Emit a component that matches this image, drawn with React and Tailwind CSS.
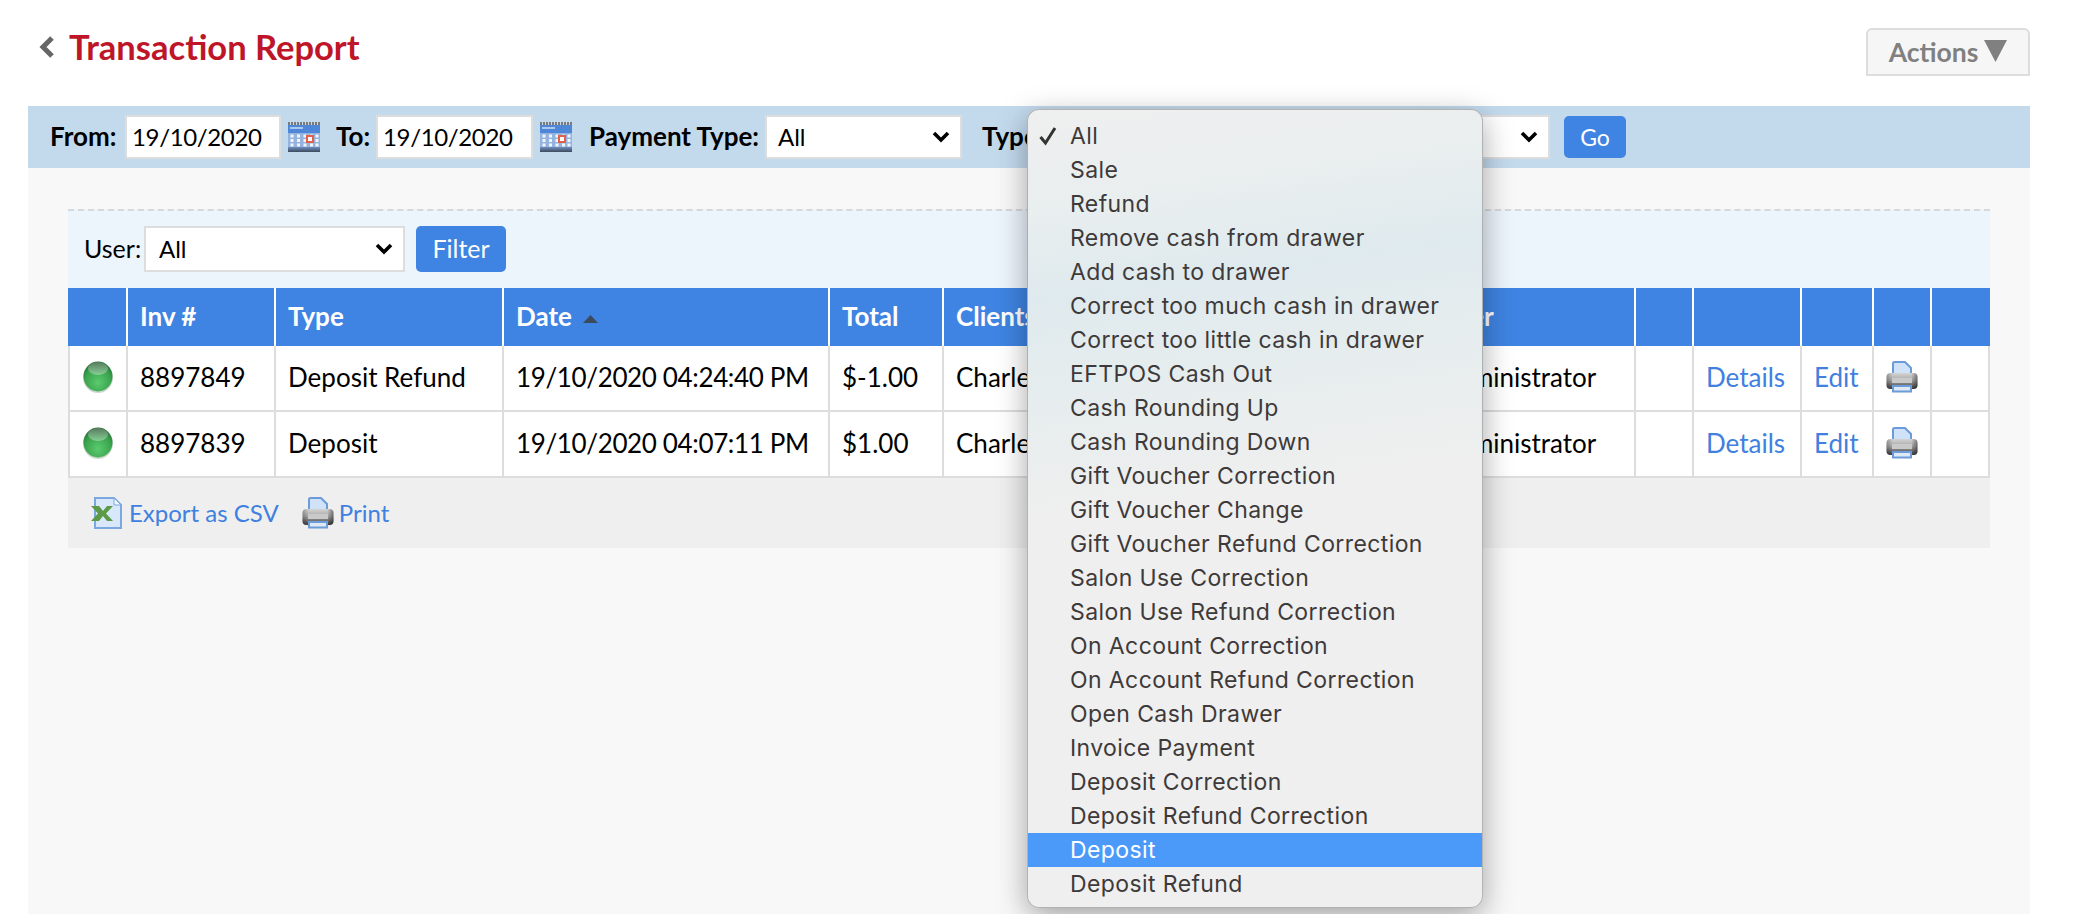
const menuItems = [
  "All",
  "Sale",
  "Refund",
  "Remove cash from drawer",
  "Add cash to drawer",
  "Correct too much cash in drawer",
  "Correct too little cash in drawer",
  "EFTPOS Cash Out",
  "Cash Rounding Up",
  "Cash Rounding Down",
  "Gift Voucher Correction",
  "Gift Voucher Change",
  "Gift Voucher Refund Correction",
  "Salon Use Correction",
  "Salon Use Refund Correction",
  "On Account Correction",
  "On Account Refund Correction",
  "Open Cash Drawer",
  "Invoice Payment",
  "Deposit Correction",
  "Deposit Refund Correction",
  "Deposit",
  "Deposit Refund",
];

const rows = [
  { inv: "8897849", type: "Deposit Refund", date: "19/10/2020 04:24:40 PM", total: "$-1.00" },
  { inv: "8897839", type: "Deposit", date: "19/10/2020 04:07:11 PM", total: "$1.00" },
];

const Chevron = () => (
  <svg width="18" height="14" viewBox="0 0 18 14" className="shrink-0">
    <path d="M2 3l7 7 7-7" fill="none" stroke="#000" strokeWidth="3.6" />
  </svg>
);

const Select = ({ className, value = "All" }) => (
  <div className={"flex items-center justify-between bg-white border-2 border-[#dddddd] pr-[10px] text-[24px] font-normal text-black " + className}>
    <span>{value}</span>
    <Chevron />
  </div>
);

const DateInput = ({ className }) => (
  <div className={"flex items-center bg-white border-2 border-[#dddddd] pl-[5px] h-[44px] text-[24px] font-normal tracking-[-0.35px] text-black " + className}>
    19/10/2020
  </div>
);

const CalendarIcon = ({ className }) => (
  <svg width="32" height="30" viewBox="0 0 32 30" className={"shrink-0 " + className}>
    <defs>
      <linearGradient id="calBottom" x1="0" y1="0" x2="0" y2="1">
        <stop offset="0" stopColor="#6f8fc0" />
        <stop offset="1" stopColor="#3c4a5c" />
      </linearGradient>
    </defs>
    <rect x="0" y="3" width="32" height="27" fill="#94b3df" />
    <rect x="0" y="3" width="32" height="8" fill="#4f87d8" />
    <rect x="2" y="5" width="13" height="2" fill="#a9c9f0" />
    <rect x="0" y="25" width="32" height="5" fill="url(#calBottom)" />
    <path d="M0 1.500h32" stroke="#7a7a7a" strokeWidth="3" strokeDasharray="2 1" />
    {[12.500, 17, 21.500].map((y) =>
      [2.500, 9, 15.500, 22, 27.500].map((x) => <rect key={x + "-" + y} x={x} y={y} width="3" height="3" fill="#f2f6fc" />)
    )}
    <rect x="19" y="14" width="6" height="6" fill="#fff" stroke="#e0604a" strokeWidth="2" />
  </svg>
);

const PrinterIcon = () => (
  <svg width="32" height="32" viewBox="0 0 32 32" className="shrink-0">
    <defs>
      <linearGradient id="printerBody" x1="0" y1="0" x2="0" y2="1">
        <stop offset="0" stopColor="#d4d4d4" />
        <stop offset="0.45" stopColor="#a8a8a8" />
        <stop offset="1" stopColor="#3c3c3c" />
      </linearGradient>
      <linearGradient id="printerSide" x1="0" y1="0" x2="1" y2="0">
        <stop offset="0" stopColor="#00000040" />
        <stop offset="0.2" stopColor="#00000000" />
        <stop offset="0.8" stopColor="#00000000" />
        <stop offset="1" stopColor="#00000066" />
      </linearGradient>
    </defs>
    <path d="M7 15V2.500A1.500 1.500 0 0 1 8.500 1H19l6 6v8z" fill="#cfe2f8" stroke="#6b9bd8" strokeWidth="2" />
    <rect x="0.500" y="12" width="31" height="16" rx="4" fill="url(#printerBody)" />
    <rect x="0.500" y="12" width="31" height="16" rx="4" fill="url(#printerSide)" />
    <rect x="6" y="17" width="20" height="5" fill="#c9c9c9" />
    <path d="M7 25h18v5.500H7z" fill="#dfe9f6" stroke="#6b9bd8" strokeWidth="2" />
  </svg>
);

const ExcelIcon = () => (
  <svg width="32" height="32" viewBox="0 0 32 32" className="shrink-0">
    <path d="M4 1h19l7 7v23H4z" fill="#d8e8fa" stroke="#7ba9df" strokeWidth="2" />
    <path d="M23 1v7h7z" fill="#f0f6fd" stroke="#7ba9df" strokeWidth="1" />
    <path d="M0 9h8l4 5 4-5h6l-7 7.500 7 7.500h-6l-4-5-4 5H0l7-7.500z" fill="#5c9a47" />
  </svg>
);

const StatusDot = () => (
  <svg width="30" height="32" viewBox="0 0 30 32" className="mx-auto block">
    <defs>
      <radialGradient id="dotFill" cx="0.5" cy="0.7" r="0.65">
        <stop offset="0" stopColor="#5acb6e" />
        <stop offset="0.7" stopColor="#3aa34e" />
        <stop offset="1" stopColor="#2a7a3a" />
      </radialGradient>
      <linearGradient id="dotShine" x1="0" y1="0" x2="0" y2="1">
        <stop offset="0" stopColor="#5a7a62" />
        <stop offset="1" stopColor="#84d092" />
      </linearGradient>
    </defs>
    <ellipse cx="15" cy="16.500" rx="15" ry="15.500" fill="#cfd8d0" />
    <ellipse cx="15" cy="15.500" rx="14.500" ry="15" fill="url(#dotFill)" />
    <ellipse cx="15" cy="7.500" rx="10" ry="6.500" fill="url(#dotShine)" />
  </svg>
);

const Th = ({ children, last }) => (
  <th className={"h-[58px] bg-[#3f84e2] text-left font-bold text-white pl-[12px] pb-[2px] " + (last ? "" : "border-r-2 border-white")}>
    {children}
  </th>
);

const Td = ({ children, first, className = "" }) => (
  <td className={"h-[66px] border-r-2 border-b-2 border-[#dddddd] bg-white pl-[12px] pb-[2px] text-black whitespace-nowrap overflow-hidden " + (first ? "border-l-2 " : "") + className}>
    {children}
  </td>
);

export default function App() {
  return (
    <div className="relative w-[2076px] h-[914px] overflow-hidden bg-white font-[Lato,sans-serif]">
      <div className="flex justify-between items-start h-[106px] pl-[39px] pr-[46px] pt-[28px]">
        <div className="flex items-center h-[38px]">
          <svg width="16" height="22" viewBox="0 0 16 22">
            <path d="M13 2L4 11l9 9" fill="none" stroke="#666" strokeWidth="5" />
          </svg>
          <h1 className="ml-[14px] text-[34.500px] font-bold text-[#be1628] leading-none">Transaction Report</h1>
        </div>
        <div className="flex items-center gap-[6px] h-[48px] w-[164px] justify-center pt-[2px] bg-[#f6f6f6] border-2 border-[#dddddd] rounded-t-[6px] text-[26.500px] font-bold text-[#808080]">
          Actions
          <svg width="23" height="22" viewBox="0 0 23 22" className="-mt-[4px]">
            <path d="M0 0h23L11.500 22z" fill="#808080" />
          </svg>
        </div>
      </div>

      <div className="ml-[28px] w-[2002px] h-[808px] bg-[#f8f8f8]">
        <div className="flex items-center h-[62px] bg-[#c3daed] pl-[22px] text-[26px] font-bold text-black">
          <b className="font-bold w-[75px] pb-[2px]">From:</b>
          <DateInput className="w-[156px]" />
          <CalendarIcon className="ml-[7px]" />
          <b className="font-bold ml-[16px] w-[40px] pb-[2px]">To:</b>
          <DateInput className="w-[157px]" />
          <CalendarIcon className="ml-[7px]" />
          <b className="font-bold ml-[17px] w-[176px] pb-[2px]">Payment Type:</b>
          <Select className="w-[197px] h-[44px] pl-[11px]" />
          <b className="font-bold ml-[20px] w-[64px] pb-[2px]">Type:</b>
          <Select className="w-[504px] h-[44px] pl-[11px]" />
          <button className="ml-[14px] w-[62px] h-[42px] rounded-[5px] bg-[#3f84e2] text-white text-[23px] font-normal">Go</button>
        </div>

        <div className="mx-[40px] mt-[41px]">
          <div className="flex items-center h-[79px] pb-[2px] bg-[#ecf4fc] border-t-2 border-dashed border-[#d8d8d8] pl-[16px] text-[25px] text-black">
            <span className="w-[60px]">User:</span>
            <Select className="w-[261px] h-[46px] pl-[13px]" />
            <button className="ml-[11px] w-[90px] h-[46px] rounded-[5px] bg-[#3f84e2] text-white text-[25px]">Filter</button>
          </div>

          <table className="table-fixed border-separate border-spacing-0 w-[1922px] text-[26px]">
            <colgroup>
              <col className="w-[60px]" />
              <col className="w-[148px]" />
              <col className="w-[228px]" />
              <col className="w-[326px]" />
              <col className="w-[114px]" />
              <col className="w-[484px]" />
              <col className="w-[208px]" />
              <col className="w-[58px]" />
              <col className="w-[108px]" />
              <col className="w-[72px]" />
              <col className="w-[58px]" />
              <col className="w-[58px]" />
            </colgroup>
            <thead>
              <tr>
                <Th />
                <Th>Inv #</Th>
                <Th>Type</Th>
                <Th>
                  <span className="inline-flex items-center gap-[11px]">
                    Date
                    <svg width="15" height="8" viewBox="0 0 15 8" className="mt-[5px]">
                      <path d="M7.500 0L15 8H0z" fill="#3c4a5e" />
                    </svg>
                  </span>
                </Th>
                <Th>Total</Th>
                <Th>Clients</Th>
                <Th>User</Th>
                <Th />
                <Th />
                <Th />
                <Th />
                <Th last />
              </tr>
            </thead>
            <tbody>
              {rows.map((row) => (
                <tr key={row.inv}>
                  <Td first className="!pl-0"><StatusDot /></Td>
                  <Td>{row.inv}</Td>
                  <Td>{row.type}</Td>
                  <Td className="tracking-[-0.36px]">{row.date}</Td>
                  <Td>{row.total}</Td>
                  <Td>Charles Smith</Td>
                  <Td>Administrator</Td>
                  <Td />
                  <Td className="!text-[#4080e0]">Details</Td>
                  <Td className="!text-[#4080e0]">Edit</Td>
                  <Td><PrinterIcon /></Td>
                  <Td />
                </tr>
              ))}
            </tbody>
          </table>

          <div className="flex items-center h-[70px] bg-[#efefef] pl-[23px] text-[24px] text-[#4080e0]">
            <ExcelIcon />
            <span className="ml-[6px]">Export as CSV</span>
            <span className="ml-[23px]"><PrinterIcon /></span>
            <span className="ml-[5px]">Print</span>
          </div>
        </div>
      </div>

      <div className="absolute left-[1027px] top-[109px] w-[456px] h-[799px] pt-[9px] rounded-[12px] border border-[#00000040] bg-[linear-gradient(172deg,#efefef_0%,#e9eeef_12%,#dfeaee_22%,#e7edee_35%,#efefef_48%,#efefef_100%)] shadow-[0_8px_30px_rgba(0,0,0,0.35)] font-[Inter,sans-serif] text-[23px] tracking-[0.4px] text-[#3e3a3a] overflow-hidden">
        {menuItems.map((item, i) => (
          <div key={item} className={"relative flex items-center h-[34px] pl-[42px] leading-none " + (item === "Deposit" ? "bg-[#4b9afa] text-white" : "")}>
            {i === 0 && (
              <svg width="18" height="20" viewBox="0 0 18 20" className="absolute left-[11px] top-[7px]">
                <path d="M1.500 11l5 6L16 2" fill="none" stroke="#333" strokeWidth="3" />
              </svg>
            )}
            {item}
          </div>
        ))}
      </div>
    </div>
  );
}
